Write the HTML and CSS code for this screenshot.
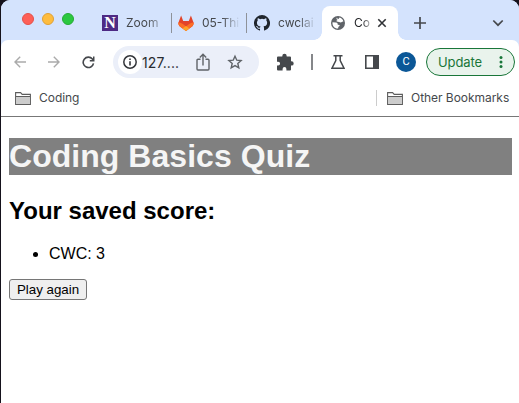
FILE: index.html
```html
<!DOCTYPE html>
<html lang="en">
<head>
<meta charset="utf-8">
<title>Coding Basics Quiz</title>
<link rel="stylesheet" href="styles.css">
</head>
<body>
<div class="window">
  <header class="tabstrip">
    <div class="lights"><i class="red"></i><i class="amber"></i><i class="green"></i></div>
    <div class="tab tab-zoom">
      <span class="n-logo">N</span>
      <span class="label fade">Zoom</span>
    </div>
    <div class="tab tab-lab">
      <svg width="16" height="16" viewBox="0 0 16 16"><path fill="#e24329" d="M3.1 .5 5.2 6h5.6L12.9.5 15.7 8 14.8 11 8 16 1.2 11 .3 8z"/><path fill="#fc6d26" d="M.4 7.6C2.6 7.5 5 9 8 11.4 11 9 13.4 7.5 15.6 7.6 16 9.2 15.4 10.4 14 11.5L8 16 2 11.5C.6 10.4 0 9.2.4 7.6z"/><path fill="#fca326" d="m4.6 13.4L8 11l3.4 2.4L8 16z"/></svg>
      <span class="label fade">05-Thi</span>
    </div>
    <div class="tab tab-hub">
      <svg width="16" height="16" viewBox="0 0 16 16"><path fill="#20262d" d="M8 0a8 8 0 0 0-2.53 15.59c.4.07.55-.17.55-.38v-1.49c-2.01.37-2.53-.49-2.69-.94-.09-.23-.48-.94-.82-1.13-.28-.15-.68-.52-.01-.53.63-.01 1.08.58 1.23.82.72 1.21 1.87.87 2.33.66.07-.52.28-.87.51-1.07-1.78-.2-3.64-.89-3.64-3.95 0-.87.31-1.59.82-2.15-.08-.2-.36-1.02.08-2.12 0 0 .67-.21 2.2.82a7.6 7.6 0 0 1 4 0c1.53-1.04 2.2-.82 2.2-.82.44 1.1.16 1.92.08 2.12.51.56.82 1.27.82 2.15 0 3.07-1.87 3.75-3.65 3.95.29.25.54.73.54 1.48v2.2c0 .21.15.46.55.38A8 8 0 0 0 8 0z"/></svg>
      <span class="label fade">cwclai</span>
    </div>
    <div class="tab tab-active">
      <svg width="14" height="14" viewBox="0 0 14 14"><circle cx="7" cy="7" r="7" fill="#5f6368"/><path fill="#fff" d="M1.5 6.2 5 6.5c1.5.3 1.8 1 1.7 2.2l1.8.2c.5.7-.3 1.4-1.1 1.8L7.1 12.5C3.6 12.7 1.1 10 1.5 6.2zM6 1.6c.3 1 .5 1.5 1.5 1.3L8.5 1.6c2 .5 3.5 2 3.9 4-1.1-.4-1.6.8-2.7.8L8 5.9 5.8 5.5C5 4.6 5.7 4 6.8 3.9 5.5 3.7 5 2.6 6 1.6z"/></svg>
      <span class="label fade-short">Co</span>
      <svg class="close" width="10" height="10" viewBox="0 0 10 10"><path d="m1.3 1.3 7.4 7.4m0-7.4L1.3 8.7" stroke="#303236" stroke-width="1.6"/></svg>
    </div>
    <svg class="plus" width="12" height="12" viewBox="0 0 12 12"><path d="M6 0v12M0 6h12" stroke="#45484c" stroke-width="1.7"/></svg>
    <svg class="chevron" width="12" height="8" viewBox="0 0 12 8"><path d="m1.3 1.5 4.7 4.7 4.7-4.7" fill="none" stroke="#45484c" stroke-width="1.7"/></svg>
  </header>

  <div class="toolbar">
    <svg class="back" width="12" height="12" viewBox="0 0 12 12"><path d="M12 6H1M6.2.8 1 6l5.2 5.2" fill="none" stroke="#aaa" stroke-width="1.4"/></svg>
    <svg class="forward" width="12" height="12" viewBox="0 0 12 12"><path d="M0 6h11M5.8.8 11 6l-5.2 5.2" fill="none" stroke="#aaa" stroke-width="1.4"/></svg>
    <svg class="reload" width="13" height="13" viewBox="0 0 13 13"><path d="M11.5 7.3A5.2 5.2 0 1 1 10.4 3l1.2 1.5" fill="none" stroke="#45484c" stroke-width="1.6"/><path d="M12.5.4v5H7.8V4H11V.4z" fill="#45484c"/></svg>
    <div class="omnibox">
      <span class="info"><svg width="14" height="14" viewBox="0 0 14 14"><circle cx="7" cy="7" r="6.2" fill="none" stroke="#333539" stroke-width="1.5"/><path d="M7 6.2v4.3M7 3.5V5" stroke="#333539" stroke-width="1.6"/></svg></span>
      <span class="url">127....</span>
      <svg class="share" width="14" height="18" viewBox="0 0 14 18"><path d="M4.5 6.3H2A1 1 0 0 0 1 7.3V16a1 1 0 0 0 1 1h10a1 1 0 0 0 1-1V7.3a1 1 0 0 0-1-1H9.5M7 12.5V1.5M3.8 4.5 7 1.3l3.2 3.2" fill="none" stroke="#5f6368" stroke-width="1.4"/></svg>
      <svg class="star" width="16" height="16" viewBox="0 0 16 16"><path d="m8 2.2 1.8 4 4.3.4-3.3 2.9 1 4.3L8 11.6l-3.8 2.2 1-4.3-3.3-2.9 4.3-.4z" fill="none" stroke="#5f6368" stroke-width="1.4"/></svg>
    </div>
    <svg class="puzzle" width="18" height="18" viewBox="0 0 18 18"><path fill="#45484c" d="M2 3.5h4.3V3a2.2 2.2 0 0 1 4.4 0v.5H14a1 1 0 0 1 1 1v3.7h.5a2.2 2.2 0 0 1 0 4.4H15v3.9a1 1 0 0 1-1 1h-3.6V16a1.9 1.9 0 0 0-3.8 0v1.5H2a1 1 0 0 1-1-1v-4h1.2a1.9 1.9 0 0 0 0-3.8H1V4.5a1 1 0 0 1 1-1z"/></svg>
    <i class="divider"></i>
    <svg class="flask" width="14" height="14" viewBox="0 0 14 14"><path d="M2.5.8h9M4.8 1v4.6L1 13.2h12L9.2 5.6V1" fill="none" stroke="#45484c" stroke-width="1.5"/></svg>
    <svg class="panel" width="14" height="14" viewBox="0 0 14 14"><path d="M.8.8h12.4v12.4H.8z" fill="none" stroke="#45484c" stroke-width="1.6"/><path d="M8 0h6v14H8z" fill="#45484c"/></svg>
    <span class="avatar">C</span>
    <div class="update"><span>Update</span><svg width="4" height="12" viewBox="0 0 4 12"><g fill="#197639"><circle cx="2" cy="1.6" r="1.5"/><circle cx="2" cy="6" r="1.5"/><circle cx="2" cy="10.4" r="1.5"/></g></svg></div>
  </div>

  <nav class="bookmarks">
    <svg class="folder" width="16" height="13" viewBox="0 0 16 13"><path d="M.6 12.4V.6h5l1.6 1.8h8.2v10z" fill="#fff" stroke="#5d5d5d" stroke-width="1.1"/><path d="M1 4.7h14v7.2H1z" fill="#ccc"/><path d="M1 4.5h14" stroke="#5d5d5d"/></svg>
    <span class="bm">Coding</span>
    <span class="other">
      <svg class="folder" width="16" height="13" viewBox="0 0 16 13"><path d="M.6 12.4V.6h5l1.6 1.8h8.2v10z" fill="#fff" stroke="#5d5d5d" stroke-width="1.1"/><path d="M1 4.7h14v7.2H1z" fill="#ccc"/><path d="M1 4.5h14" stroke="#5d5d5d"/></svg>
      <span class="bm">Other Bookmarks</span>
    </span>
  </nav>

  <main class="page">
    <h1>Coding Basics Quiz</h1>
    <h2>Your saved score:</h2>
    <ul><li>CWC: 3</li></ul>
    <button type="button">Play again</button>
  </main>
</div>
</body>
</html>
```
FILE: styles.css
```css
* { box-sizing: border-box; }
html, body { height: 100%; margin: 0; overflow: hidden; }
body { background: #15121c; font-family: Inter, "Liberation Sans", sans-serif; }
svg { display: block; flex: none; }
.window {
  height: 403px;
  margin-left: 1px;
  background: linear-gradient(#d4e3fd 60px, #fff 60px);
  border-radius: 9px 9px 0 0;
  overflow: hidden;
}

.tabstrip { display: flex; align-items: flex-start; height: 40px; background: #d4e3fd; }
.lights { display: flex; gap: 8px; padding: 13px 0 0 21px; width: 101px; flex: none; }
.lights i { width: 12px; height: 12px; border-radius: 50%; }
.red { background: #fe5f57; border: 1px solid #e3514a; }
.amber { background: #febc3e; border: 1px solid #dfa136; }
.green { background: #2bc840; border: 1px solid #27aa35; }
.tab {
  display: flex;
  align-items: center;
  gap: 8px;
  flex: none;
  height: 20px;
  margin-top: 13px;
  font-size: 12px;
  color: #45484c;
}
.tab-zoom { width: 69.5px; border-right: 1px solid #8e9299; }
.tab-lab { width: 75.5px; padding-left: 6.5px; border-right: 1px solid #8e9299; }
.tab-hub { width: 75px; padding-left: 7px; }
.label { overflow: hidden; white-space: nowrap; line-height: 20px; }
.fade { width: 37px; mask-image: linear-gradient(to right, #000 55%, #0001); }
.tab-zoom .fade { mask-image: linear-gradient(to right, #000 55%, #0006 90%); }
.n-logo {
  width: 16px;
  height: 16px;
  background: #4e2a84;
  color: #fff;
  font: bold 16px/16px "Liberation Serif", serif;
  text-align: center;
}
.tab-active {
  position: relative;
  width: 76px;
  height: 34px;
  margin-top: 6px;
  padding-left: 9px;
  background: #fff;
  border-radius: 8px 8px 0 0;
  gap: 9px;
  color: #1f2023;
}
.tab-active::before, .tab-active::after {
  content: "";
  position: absolute;
  bottom: 0;
  width: 8px;
  height: 8px;
}
.tab-active::before { left: -8px; background: radial-gradient(circle at 0 0, #d4e3fd 7.5px, #fff 8px); }
.tab-active::after { right: -8px; background: radial-gradient(circle at 100% 0, #d4e3fd 7.5px, #fff 8px); }
.fade-short { width: 16px; mask-image: linear-gradient(to right, #000 50%, #0005); }
.close { margin-left: -2px; }
.plus { margin: 17px 0 0 16px; }
.chevron { margin: 19px 15px 0 auto; }

.toolbar { display: flex; align-items: center; height: 44px; background: #fff; border-radius: 7px 7px 0 0; }
.back { margin-left: 13px; }
.forward { margin-left: 22px; }
.reload { margin-left: 22px; }
.omnibox {
  display: flex;
  align-items: center;
  width: 146px;
  height: 32px;
  margin-left: 18px;
  padding-left: 5px;
  border-radius: 16px;
  background: #ebeff9;
  flex: none;
}
.info { display: grid; place-items: center; width: 24px; height: 24px; border-radius: 50%; background: #fff; flex: none; }
.url { width: 40px; white-space: nowrap; font-size: 14px; letter-spacing: .1px; color: #292b2f; }
.share { margin-left: 14px; }
.star { margin-left: 17px; }
.puzzle { margin-left: 17px; }
.divider { width: 2px; height: 16px; margin-left: 17px; background: #85878a; }
.flask { margin-left: 18px; }
.panel { margin-left: 20px; }
.avatar {
  width: 20px;
  height: 20px;
  margin-left: 17px;
  border-radius: 50%;
  background: #0b5797;
  color: #fff;
  font: 11px/20px Roboto, sans-serif;
  text-align: center;
  flex: none;
}
.update {
  display: flex;
  align-items: center;
  width: 89px;
  height: 28px;
  margin-left: 10px;
  padding-left: 11px;
  gap: 15px;
  border: 1px solid #197639;
  border-radius: 14px;
  background: #e9f3ec;
  color: #197639;
  font-size: 13px;
  letter-spacing: -.1px;
  flex: none;
}
.update span { width: 46px; }

.bookmarks {
  display: flex;
  align-items: center;
  height: 33px;
  padding: 0 9px 4px 14px;
  border-bottom: 1px solid #777;
  font-size: 12px;
  color: #45484c;
  background: #fff;
}
.bm { margin-left: 8px; line-height: 16px; white-space: nowrap; letter-spacing: -.04px; }
.other { display: flex; align-items: center; height: 16px; width: 134px; margin-left: auto; padding-left: 10px; border-left: 1px solid #ccc; }

.page { padding: 21px 7px 0 8px; font-family: "Liberation Sans", sans-serif; color: #000; }
h1 { margin: 0; height: 37px; font-size: 32px; line-height: 36px; letter-spacing: .04px; background: #808080; color: #f5f5f5; }
h2 { margin: 22px 0 0; font-size: 24px; line-height: 28px; }
ul { margin: 20px 0 0; padding-left: 40px; font-size: 16px; line-height: 18px; }
button {
  display: block;
  width: 78px;
  height: 21px;
  margin-top: 16px;
  padding: 0;
  border: 1px solid #767676;
  border-radius: 3px;
  background: #efefef;
  color: #000;
  font: 13.33px/19px "Liberation Sans", sans-serif;
}
```
